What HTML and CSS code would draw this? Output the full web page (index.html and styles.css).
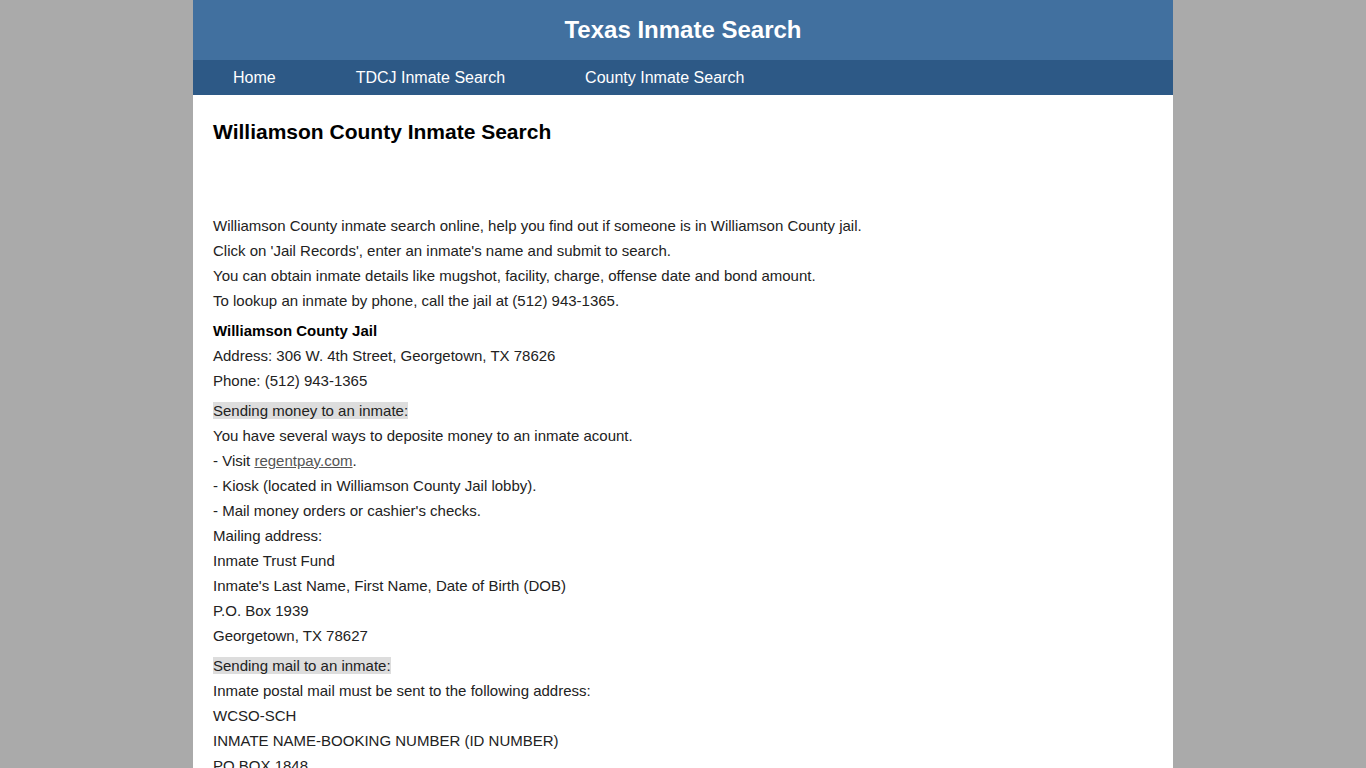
FILE: index.html
```html
<!DOCTYPE html>
<html lang="en">
<head>
<meta charset="utf-8">
<title>Williamson County Inmate Search</title>
<link rel="stylesheet" href="styles.css">
</head>
<body>
<div class="wrap">
  <header class="site-header">
    <div class="site-title">Texas Inmate Search</div>
  </header>
  <nav class="site-nav">
    <a href="#">Home</a><a href="#">TDCJ Inmate Search</a><a href="#">County Inmate Search</a>
  </nav>
  <main class="content">
    <h1 class="page-title">Williamson County Inmate Search</h1>
    <div class="ad-space"></div>
    <p>Williamson County inmate search online, help you find out if someone is in Williamson County jail.<br>
    Click on 'Jail Records', enter an inmate's name and submit to search.<br>
    You can obtain inmate details like mugshot, facility, charge, offense date and bond amount.<br>
    To lookup an inmate by phone, call the jail at (512) 943-1365.</p>
    <p><strong>Williamson County Jail</strong><br>
    Address: 306 W. 4th Street, Georgetown, TX 78626<br>
    Phone: (512) 943-1365</p>
    <p><span class="hl">Sending money to an inmate:</span><br>
    You have several ways to deposite money to an inmate acount.<br>
    - Visit <a class="link" href="#">regentpay.com</a>.<br>
    - Kiosk (located in Williamson County Jail lobby).<br>
    - Mail money orders or cashier's checks.<br>
    Mailing address:<br>
    Inmate Trust Fund<br>
    Inmate's Last Name, First Name, Date of Birth (DOB)<br>
    P.O. Box 1939<br>
    Georgetown, TX 78627</p>
    <p><span class="hl">Sending mail to an inmate:</span><br>
    Inmate postal mail must be sent to the following address:<br>
    WCSO-SCH<br>
    INMATE NAME-BOOKING NUMBER (ID NUMBER)<br>
    PO BOX 1848<br>
    Georgetown, TX 78627</p>
  </main>
</div>
</body>
</html>
```
FILE: styles.css
```css
html, body {
  margin: 0;
  padding: 0;
}
body {
  background: #aaaaaa;
  font-family: "Liberation Sans", Arial, sans-serif;
  color: #222;
}
.wrap {
  width: 980px;
  margin: 0 auto;
  background: #fff;
  min-height: 100vh;
}
.site-header {
  background: #41709f;
  height: 60px;
  text-align: center;
}
.site-title {
  color: #fff;
  font-size: 24px;
  font-weight: bold;
  line-height: 60px;
}
.site-nav {
  background: #2d5986;
  height: 35px;
  display: flex;
}
.site-nav a {
  color: #fff;
  text-decoration: none;
  font-size: 16px;
  line-height: 35px;
  padding: 0 40px;
}
.content {
  padding: 0 20px 20px;
}
.page-title {
  font-size: 21px;
  font-weight: bold;
  color: #000;
  line-height: 24px;
  margin: 25px 0 0;
}
.ad-space {
  height: 64px;
}
.content p {
  font-size: 15px;
  line-height: 25px;
  margin: 5px 0;
}
.content strong {
  color: #000;
}
.hl {
  background: #dddddd;
}
.link {
  color: #555;
  text-decoration: underline;
}
```
